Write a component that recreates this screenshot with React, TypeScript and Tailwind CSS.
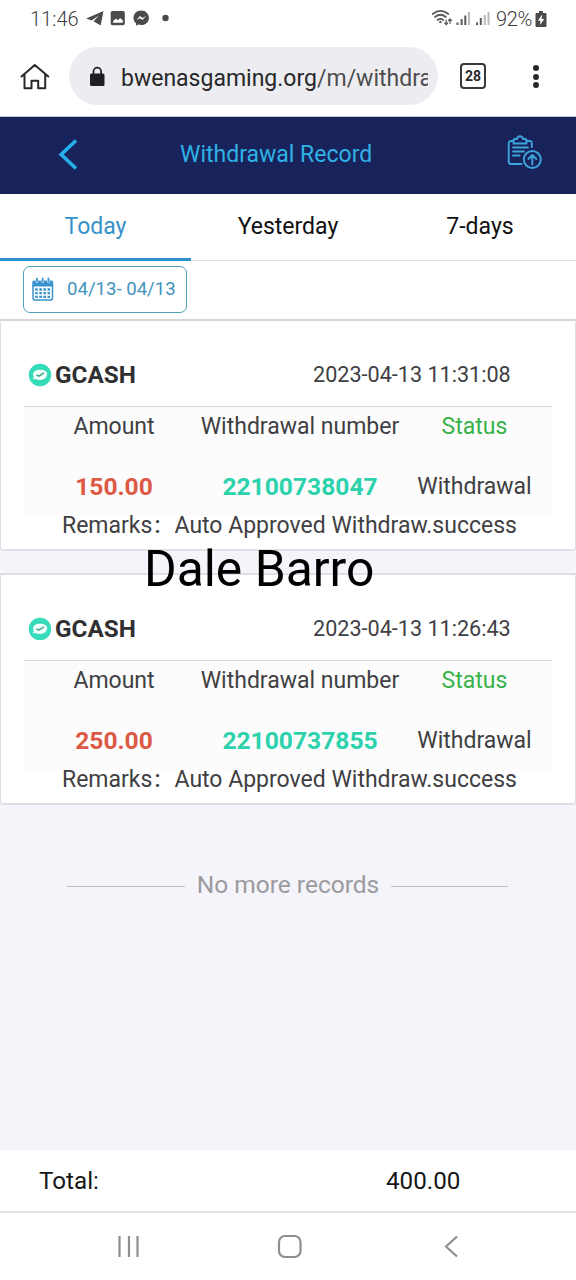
import React from "react";

type WithdrawalRecord = {
  time: string;
  amount: string;
  number: string;
};

const records: WithdrawalRecord[] = [
  { time: "2023-04-13 11:31:08", amount: "150.00", number: "22100738047" },
  { time: "2023-04-13 11:26:43", amount: "250.00", number: "22100737855" },
];

function StatusBar() {
  return (
    <div className="flex h-[38px] items-center pl-[30px] text-[#58585a]">
      <span className="w-[56px] text-[20px] leading-[38px] font-light whitespace-nowrap text-[#3c3c3e]">11:46</span>
      <svg width="90" height="24" viewBox="86 7 90 24" className="shrink-0" fill="#4b4b4d">
        <path d="M103.500 11 86.200 18.600 91.500 20.400 99 15.600 93.500 21.200 100.600 25.600Z" />
        <path fillRule="evenodd" d="M112.500 11h10.500a1.800 1.800 0 0 1 1.800 1.800v10.600a1.800 1.800 0 0 1-1.800 1.800h-10.500a1.800 1.800 0 0 1-1.800-1.800V12.800a1.800 1.800 0 0 1 1.800-1.800ZM113 22.800h9.800v-2.300l-2.600-2.500-2.300 2.300-1.900-1.700-3 2.600Z" />
        <path fillRule="evenodd" d="M141.200 10.600c-4.400 0-7.700 3.200-7.700 7.300 0 2.200.9 4.100 2.500 5.400v2.400l2.200-1.100c1 .3 1.900.4 3 .4 4.400 0 7.700-3.100 7.700-7.100s-3.300-7.300-7.700-7.300ZM136.400 20l3.600-4 2.400 2 3.700-2-3.700 4-2.400-1.800Z" />
        <circle cx="165.500" cy="18" r="3.200" />
      </svg>
      <svg width="62" height="26" viewBox="430 6 62 26" className="ml-[254px] shrink-0" fill="none" stroke="#59595b" strokeLinecap="round">
        <path strokeWidth="1.700" d="M432.700 14q7.800-6.400 15.600 0M435 17q5.400-4.500 10.800 0M437.600 20q2.800-2.300 5.600 0" />
        <circle cx="440.300" cy="22" r=".8" fill="#59595b" />
        <path strokeWidth="1.200" d="M446.200 20v4.500m-1.400-1.500 1.400 1.500 1.400-1.500M450 23.500V19m-1.400 1.500 1.400-1.500 1.400 1.500" />
        <g strokeWidth="2" strokeLinecap="butt">
          <path d="M457.500 22.500V25M461.600 19v6M465.300 15.500V25M477 22.500V25M480.800 18v7" />
          <path stroke="#b9b9bb" d="M469 12v13M484.800 15v10M488.500 12v13" />
        </g>
      </svg>
      <span className="ml-[4px] w-[39px] text-[20px] leading-[38px] font-light tracking-[-0.300px] whitespace-nowrap text-[#3c3c3e]">92%</span>
      <svg width="12" height="16" viewBox="0 0 12 16" className="-mt-[1px] shrink-0">
        <path fill="#4b4b4d" d="M4 0h4v2h2.500Q11.500 2 11.500 3v12q0 1-1 1h-9q-1 0-1-1V3q0-1 1-1H4Z" />
        <path fill="#fff" d="M7.200 3.500 2.800 9.700h2.700L5 14l4.300-5.900H6.600Z" />
      </svg>
    </div>
  );
}

function BrowserBar() {
  return (
    <div className="flex h-[79px] items-start border-b border-[#c4c8dc] pt-[9px]">
      <svg width="34" height="34" viewBox="18 60 34 34" className="mt-[13px] ml-[18px] shrink-0" fill="none" stroke="#29292b" strokeWidth="2" strokeLinejoin="round" strokeLinecap="round">
        <path d="M21.500 76.500 34.800 65l13.500 11.500M24.500 75v13.300h7v-7.500h6.700v7.500h7V75" />
      </svg>
      <div className="ml-[17px] flex h-[58px] w-[369px] shrink-0 items-center rounded-full bg-[#ededf1] pl-[20px]">
        <svg width="17" height="22" viewBox="0 0 17 22" className="mt-[2px] shrink-0">
          <rect x="1" y="7.500" width="14.500" height="12.500" rx="1.500" fill="#202024" />
          <path d="M4.500 8V5.500a3.800 3.800 0 0 1 7.600 0V8" fill="none" stroke="#202024" strokeWidth="1.700" />
        </svg>
        <div className="ml-[15px] w-[307px] overflow-hidden pt-[5px] text-[23px] leading-[53px] whitespace-nowrap text-[#4d4d50]">
          <span className="text-[#27272a]">bwenasgaming.org</span>/m/withdra
        </div>
      </div>
      <div className="mt-[16px] ml-[22px] flex h-[26px] w-[26px] shrink-0 items-center justify-center rounded-[4px] border-2 border-[#38383a] text-[14px] leading-none font-bold text-[#28282a]">28</div>
      <div className="mt-[18px] ml-[47px] flex w-[7px] flex-col gap-[2.500px]">
        <i className="h-[6px] w-[6px] rounded-full bg-[#28282a]" />
        <i className="h-[6px] w-[6px] rounded-full bg-[#28282a]" />
        <i className="h-[6px] w-[6px] rounded-full bg-[#28282a]" />
      </div>
    </div>
  );
}

function PageHeader() {
  return (
    <header className="flex h-[77px] items-center bg-[#17235a] pb-[2px]">
      <svg width="24" height="34" viewBox="56 137 24 34" className="-mt-[1px] ml-[56px] shrink-0" fill="none" stroke="#25b0ec" strokeWidth="3.600">
        <path d="M76 140.500 61.200 154.500 76 168.500" />
      </svg>
      <h1 className="ml-[100px] w-[200px] text-[23px] leading-[30px] whitespace-nowrap text-[#30b2e6]">Withdrawal Record</h1>
      <svg width="40" height="38" viewBox="504 134 40 38" className="-mt-[3px] ml-[124px] shrink-0" fill="none" stroke="#3da5dc" strokeWidth="1.900" strokeLinecap="round" strokeLinejoin="round">
        <path d="M513.500 141H511q-2.300 0-2.300 2.300v18.400q0 2.300 2.300 2.300h10.500M526.500 141h3q2.300 0 2.300 2.300V147" />
        <path d="M513.500 143.500v-3q0-1.500 1.800-1.500h1.700q.5-2.800 3-2.800t3 2.800h1.700q1.800 0 1.800 1.500v3Z" />
        <path d="M513 147.500h15M513 151.500h11M513 155.500h6.500" />
        <circle cx="532.300" cy="159.500" r="8.500" />
        <path d="M532.300 164.500v-9.500m-4 4 4-4 4 4" />
      </svg>
    </header>
  );
}

function Tabs() {
  return (
    <nav className="grid h-[67px] grid-cols-3 border-b border-[#dedee0] text-center text-[23px] leading-[65px] text-[#101012]">
      <div className="h-[67px] w-[191px] border-b-[3px] border-[#2b8fcc] text-[#3492c9]">Today</div>
      <div>Yesterday</div>
      <div>7-days</div>
    </nav>
  );
}

function DateFilter() {
  return (
    <div className="flex h-[60px] items-start border-b-2 border-[#d6d6d8] pt-[5px] pl-[23px]">
      <button className="flex h-[47px] w-[164px] items-center rounded-[7px] border border-[#4ea3b8] pl-[7px]">
        <svg width="24" height="25" viewBox="0 0 24 25" className="shrink-0">
          <path fill="none" stroke="#3a92cf" strokeWidth="1.500" d="M2 8v13q0 2 2 2h15.500q2 0 2-2V8" />
          <path fill="#3a92cf" d="M1.300 5q0-1.500 1.700-1.500h17.500q1.700 0 1.700 1.500v4.500H1.300Z" />
          <path stroke="#fff" strokeWidth="2.800" strokeLinecap="round" d="M6 2v2.500M11.700 2v2.500M17.500 2v2.500" />
          <path stroke="#3a92cf" strokeWidth="1.800" strokeLinecap="round" d="M6 1.500v3M11.700 1.500v3M17.500 1.500v3" />
          <path stroke="#3a92cf" strokeWidth="2.300" strokeDasharray="2.600 1.500" d="M4.200 12.500h15.300M4.200 16.200h15.300M4.200 19.900h15.300" />
        </svg>
        <span className="ml-[12px] text-[18.600px] whitespace-nowrap text-[#4393bd]">04/13- 04/13</span>
      </button>
    </div>
  );
}

function RecordCard({ record }: { record: WithdrawalRecord }) {
  return (
    <article className="h-[230px] rounded-[3px] border-x border-b-2 border-[#dfdfe5] bg-white px-[23px] pt-[23px] text-[23px] leading-[40px] text-[#404043]">
      <div className="flex h-[63px] items-center border-b border-[#d9d9dc]">
        <svg width="24" height="24" viewBox="0 0 24 24" className="ml-[4px] shrink-0">
          <circle cx="12" cy="12" r="11.200" fill="#36dcb9" />
          <path fill="#f3fffc" d="M5 10.500Q6.500 6.500 12 6.700q5.500-.3 7.200 3.500 0 6.500-7.200 6.700-2.500 0-4.200-1-2 .8-3-.2 1.300-1 .9-2.200-.8-1.300-.7-3Z" />
          <path fill="none" stroke="#4aa894" strokeWidth="1.600" d="m8.300 12 2.700 1 5-3.200" />
        </svg>
        <b className="ml-[3px] w-[258px] text-[24.300px] text-[#303033]">GCASH</b>
        <time className="text-[21.600px] whitespace-nowrap">{record.time}</time>
      </div>
      <div className="grid h-[109px] grid-cols-[176px_200px_152px] grid-rows-[40px_40px] content-start gap-y-[20px] bg-[#fcfcfc] text-center whitespace-nowrap">
        <span className="pl-[4px]">Amount</span>
        <span>Withdrawal number</span>
        <span className="pr-[3px] text-[#38b24a]">Status</span>
        <b className="pl-[4px] text-[24.600px] text-[#dc5945]">{record.amount}</b>
        <b className="text-[24.600px] text-[#2bd2ac]">{record.number}</b>
        <span className="pr-[3px]">Withdrawal</span>
      </div>
      <div className="flex h-[20px] items-center pl-[38px] whitespace-nowrap">
        <span className="w-[112.500px]">Remarks<b className="ml-[2px] font-medium">:</b></span>
        <span>Auto Approved Withdraw.success</span>
      </div>
    </article>
  );
}

export default function App() {
  return (
    <div className="relative flex h-[1280px] w-[576px] flex-col overflow-hidden bg-white font-[Roboto,sans-serif]">
      <StatusBar />
      <BrowserBar />
      <PageHeader />
      <Tabs />
      <DateFilter />
      <main className="flex h-[829px] flex-col bg-[#f4f4fa]">
        <RecordCard record={records[0]} />
        <div className="h-[24px] border-b-2 border-[#dfdfe5]" />
        <RecordCard record={records[1]} />
        <div className="mt-[64px] flex h-[32px] items-center pl-[67px] text-[#9b9b9f]">
          <i className="mt-[3px] h-px w-[118px] bg-[#bdbdc3]" />
          <span className="w-[206px] text-center text-[24.500px] leading-[32px] whitespace-nowrap">No more records</span>
          <i className="mt-[3px] h-px w-[117px] bg-[#bdbdc3]" />
        </div>
      </main>
      <footer className="flex h-[63px] items-center border-b-2 border-[#e4e4e4] pt-[2px] pl-[39px] text-[24.200px] text-[#171719]">
        <span className="w-[347px]">Total:</span>
        <span>400.00</span>
      </footer>
      <svg width="576" height="67" viewBox="0 1213 576 67" fill="none" stroke="#8e8e90" strokeWidth="2.200">
        <path d="M119.500 1236v21M129 1236v21M137.500 1236v21" />
        <rect x="279" y="1236" width="21.500" height="21" rx="6" />
        <path d="m457 1236.500-11 10 11 10" />
      </svg>
      <div className="absolute top-[540px] left-[144px] text-[49.800px] leading-[58px] whitespace-nowrap text-black">Dale Barro</div>
    </div>
  );
}
